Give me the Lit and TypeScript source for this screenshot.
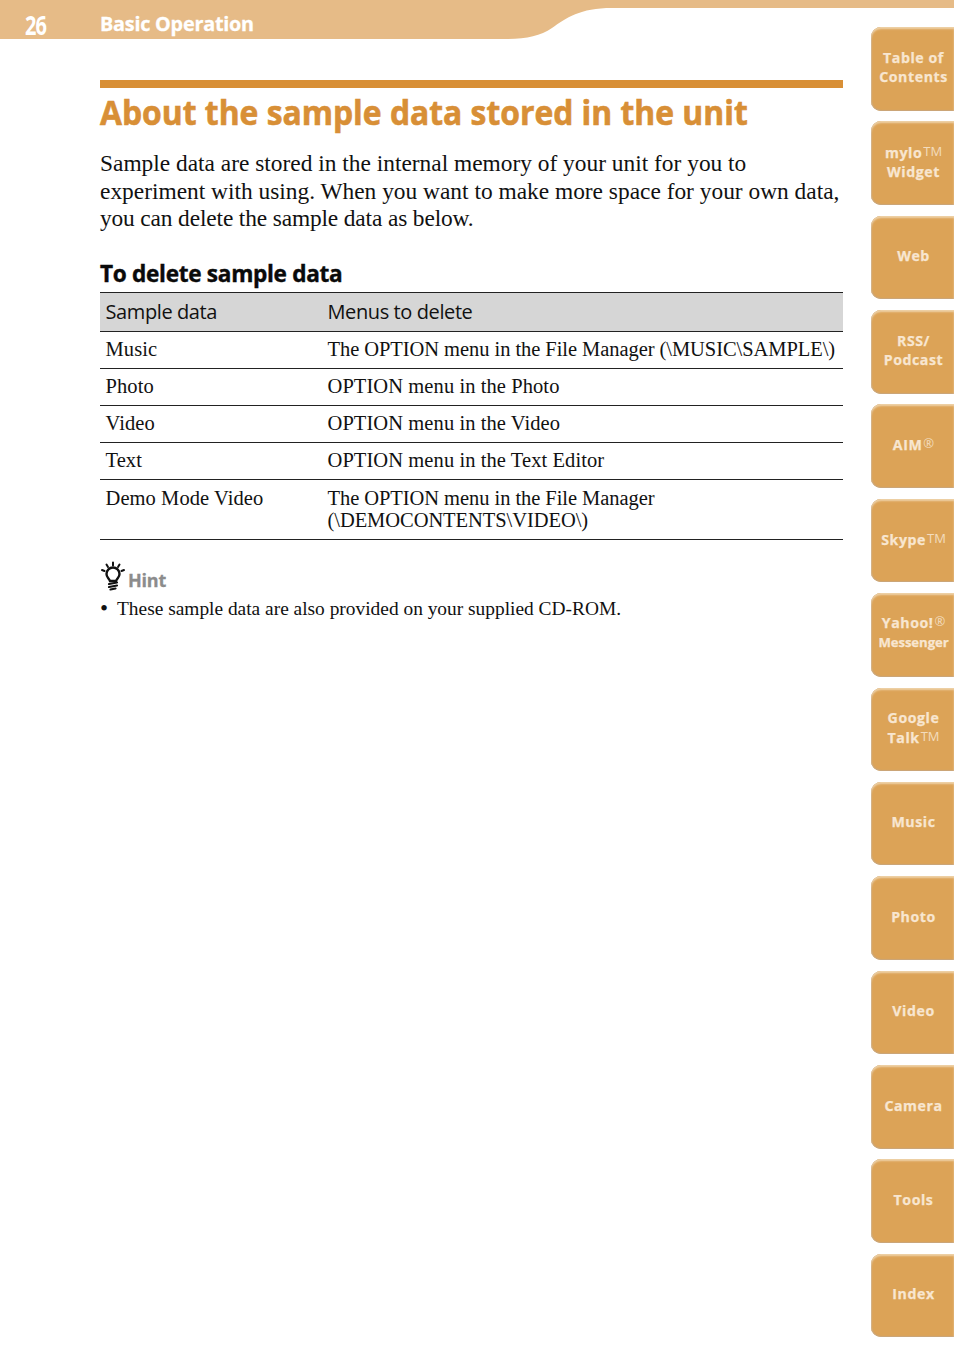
import { LitElement, html, css, svg } from "lit";
import { customElement } from "lit/decorators.js";

const TABS: [string, string?, string?][] = [
  ["Table of", "Contents"],
  ["mylo™", "Widget"],
  ["Web"],
  ["RSS/", "Podcast"],
  ["AIM®"],
  ["Skype™"],
  ["Yahoo!®", "Messenger"],
  ["Google", "Talk™"],
  ["Music"],
  ["Photo"],
  ["Video"],
  ["Camera"],
  ["Tools"],
  ["Index"],
];

const ROWS: [string, string, string][] = [
  ["Music", "The OPTION menu in the File Manager (\\MUSIC\\SAMPLE\\)", "tight"],
  ["Photo", "OPTION menu in the Photo", ""],
  ["Video", "OPTION menu in the Video", ""],
  ["Text", "OPTION menu in the Text Editor", ""],
];

function mark(s: string) {
  const m = s.match(/^(.*?)([™®])$/);
  return m ? html`${m[1]}<span class="mk">${m[2] === "™" ? "TM" : "®"}</span>` : s;
}

@customElement("app-root")
export class AppRoot extends LitElement {
  static styles = css`
    :host { display: block; position: relative; width: 954px; height: 1370px; background: #fff; overflow: hidden; font-family: "Liberation Serif", serif; color: #111; }
    .band { position: absolute; left: 0; top: 0; width: 954px; height: 39px; }
    .page { position: relative; display: flex; align-items: flex-start; }
    .main { width: 843px; flex: none; }
    .head { display: flex; align-items: center; height: 39px; font-family: "Open Sans", sans-serif; font-weight: 700; color: #fff; }
    .num { width: 100px; padding-left: 25px; box-sizing: border-box; font-size: 27px; line-height: 39px; letter-spacing: -1.2px; transform-origin: 25px 50%; transform: scaleX(.74); margin-top: 10px; }
    .sec { font-size: 19.8px; letter-spacing: -.22px; margin-top: 7px; -webkit-text-stroke: .3px #fff; }
    .content { margin-left: 100px; padding-top: 41px; }
    .rule { height: 8px; background: #d88f36; }
    h1 { margin: 3.5px 0 0; font: 700 33.7px/40px "Open Sans", sans-serif; color: #d88f36; white-space: nowrap; -webkit-text-stroke: .6px #d88f36; transform-origin: left; transform: scaleX(.945); }
    .intro { margin: 18.5px 0 0; font-size: 23.4px; line-height: 27.5px; white-space: nowrap; }
    .last { letter-spacing: -.14px; }
    h2 { margin: 25px 0 0; font: 700 22.6px/32px "Open Sans", sans-serif; color: #0a0a0a; letter-spacing: -.3px; white-space: nowrap; -webkit-text-stroke: .4px #0a0a0a; }
    .tbl { margin-top: 2px; border-top: 1px solid #222; }
    .tr { box-sizing: border-box; display: grid; grid-template-columns: 222px 1fr; padding: 0 0 2px 5.5px; border-bottom: 1px solid #222; height: 37px; align-items: center; font-size: 20.5px; line-height: 34px; white-space: nowrap; letter-spacing: .08px; }
    .tr.th { height: 39px; padding-bottom: 0; background: #d6d6d6; font: 400 20px/36px "Open Sans", sans-serif; letter-spacing: -.4px; }
    .tr .tight { letter-spacing: -.06px; }
    .tr.tall { height: 60px; align-items: start; padding: 7px 0 0 5.5px; line-height: 22px; }
    .hint { display: flex; align-items: flex-end; margin-top: 19px; height: 31px; }
    .hint svg { width: 28px; height: 31px; flex: none; margin-bottom: -2px; }
    .hint span { font: 700 18px/22px "Open Sans", sans-serif; color: #8c8c8c; letter-spacing: -.2px; margin-bottom: -1px; -webkit-text-stroke: .3px #8c8c8c; }
    .li { display: flex; margin-top: 7px; font-size: 19.4px; line-height: 24px; white-space: nowrap; }
    .li b { width: 17px; font-weight: 400; flex: none; font-size: 23px; }
    .tabs { margin-left: 28px; padding-top: 27px; display: flex; flex-direction: column; gap: 10.78px; }
    .tab { box-sizing: border-box; width: 83px; height: 83.6px; border-radius: 10px 0 0 10px; background: #dca357; box-shadow: inset 0 2px 2px #efd2a8, inset 1px 0 1px #c9a77c, inset 0 -1px 1px #c9a77c; display: flex; flex-direction: column; align-items: center; justify-content: center; padding: 5px 0 8px 2px; font: 700 14.2px/19.5px "Open Sans", sans-serif; color: #f8e6d0; letter-spacing: .55px; text-align: center; white-space: nowrap; -webkit-text-stroke: .25px #f8e6d0; }
    .tab.y { padding-bottom: 10px; }
    .tab .narrow { letter-spacing: -.1px; font-size: 13.2px; }
    .mk { font-weight: 400; font-size: 13px; letter-spacing: 0; vertical-align: 2px; margin-left: 1px; -webkit-text-stroke: 0; opacity: .85; }
  `;

  render() {
    return html`
      <svg class="band" viewBox="0 0 954 39" aria-hidden="true">
        <path fill="#e6bb87" d="M0 0H954V8H612C580 8 566 18 552 28C540 36 526 39 505 39H0Z"></path>
      </svg>
      <div class="page">
        <div class="main">
          <div class="head"><div class="num">26</div><div class="sec">Basic Operation</div></div>
          <div class="content">
            <div class="rule"></div>
            <h1>About the sample data stored in the unit</h1>
            <p class="intro">Sample data are stored in the internal memory of your unit for you to<br />experiment with using. When you want to make more space for your own data,<br /><span class="last">you can delete the sample data as below.</span></p>
            <h2>To delete sample data</h2>
            <div class="tbl">
              <div class="tr th"><div>Sample data</div><div>Menus to delete</div></div>
              ${ROWS.map((r) => html`<div class="tr"><div>${r[0]}</div><div class=${r[2]}>${r[1]}</div></div>`)}
              <div class="tr tall"><div>Demo Mode Video</div><div class="tight">The OPTION menu in the File Manager<br />(\\DEMOCONTENTS\\VIDEO\\)</div></div>
            </div>
            <div class="hint">
              ${svg`<svg viewBox="0 0 28 31" aria-hidden="true">
                <g fill="none" stroke="#111" stroke-linecap="round">
                  <path stroke-width="2" d="M2 9l2.500 1M6.500 3.500l1.500 2.500M13 1.500v3M19.500 3.500l-1.500 2.500M24 9l-2.500 1"></path>
                  <path stroke-width="2.400" d="M10 20c-1-3-3.500-3.500-3.500-7a6.500 6.500 0 0 1 13 0c0 3.500-2.500 4-3.500 7Z"></path>
                  <path stroke-width="2.200" d="M9 23l8-1.500M9 26l8-1.500M10.500 28.500l5-1"></path>
                </g>
              </svg>`}
              <span>Hint</span>
            </div>
            <div class="li"><b>•</b><div>These sample data are also provided on your supplied CD-ROM.</div></div>
          </div>
        </div>
        <div class="tabs">
          ${TABS.map((t) => html`<div class="tab ${t[1] === "Messenger" ? "y" : ""}"><div>${mark(t[0])}</div>${t[1] ? html`<div class=${t[1] === "Messenger" ? "narrow" : ""}>${mark(t[1])}</div>` : ""}</div>`)}
        </div>
      </div>
    `;
  }
}
